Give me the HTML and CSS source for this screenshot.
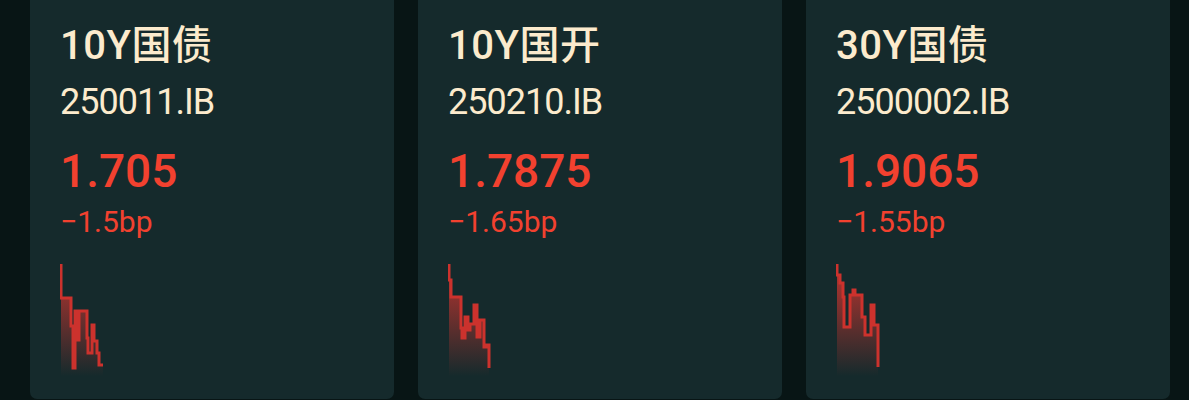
FILE: index.html
```html
<!DOCTYPE html>
<html lang="zh-CN">
  <head>
    <meta charset="UTF-8" />
    <meta name="viewport" content="width=device-width, initial-scale=1.0" />
    <title>债券行情</title>
    <link rel="stylesheet" href="styles.css">
  </head>
  <body>
    <div class="quote-row">
      <div class="quote-card">
        <div class="quote-name">10Y国债</div>
        <div class="quote-code">250011.IB</div>
        <div class="quote-price">1.705</div>
        <div class="quote-change">−1.5bp</div>
        <svg class="spark" width="46" height="114" viewBox="0 0 46 114">
          <defs>
            <linearGradient id="fill1" x1="0" y1="0" x2="0" y2="1">
              <stop offset="0" stop-color="#d0352f" stop-opacity="0.9" />
              <stop offset="1" stop-color="#d0352f" stop-opacity="0" />
            </linearGradient>
          </defs>
          <path class="spark-fill" fill="url(#fill1)" d="M1,2 V36 H11 V64 H13 V106 H15 V49 H18 V78 H19 V49 H27 V76 H28 V91 H32 V63 H34 V79 H37 V91 H39 V103 H43 V114 H1 Z" />
          <path class="spark-line" d="M1,2 V36 H11 V64 H13 V106 H15 V49 H18 V78 H19 V49 H27 V76 H28 V91 H32 V63 H34 V79 H37 V91 H39 V103 H43" />
        </svg>
      </div>

      <div class="quote-card">
        <div class="quote-name">10Y国开</div>
        <div class="quote-code">250210.IB</div>
        <div class="quote-price">1.7875</div>
        <div class="quote-change">−1.65bp</div>
        <svg class="spark" width="46" height="114" viewBox="0 0 46 114">
          <defs>
            <linearGradient id="fill2" x1="0" y1="0" x2="0" y2="1">
              <stop offset="0" stop-color="#d0352f" stop-opacity="0.9" />
              <stop offset="1" stop-color="#d0352f" stop-opacity="0" />
            </linearGradient>
          </defs>
          <path class="spark-fill" fill="url(#fill2)" d="M1,2 V18 H3 V35 H13 V66 H14 V76 H17 V55 H20 V68 H22 V62 H26 V43 H29 V75 H32 V58 H36 V85 H38 V83 H41 V106 V114 H1 Z" />
          <path class="spark-line" d="M1,2 V18 H3 V35 H13 V66 H14 V76 H17 V55 H20 V68 H22 V62 H26 V43 H29 V75 H32 V58 H36 V85 H38 V83 H41 V106" />
        </svg>
      </div>

      <div class="quote-card">
        <div class="quote-name">30Y国债</div>
        <div class="quote-code">2500002.IB</div>
        <div class="quote-price">1.9065</div>
        <div class="quote-change">−1.55bp</div>
        <svg class="spark" width="46" height="114" viewBox="0 0 46 114">
          <defs>
            <linearGradient id="fill3" x1="0" y1="0" x2="0" y2="1">
              <stop offset="0" stop-color="#d0352f" stop-opacity="0.9" />
              <stop offset="1" stop-color="#d0352f" stop-opacity="0" />
            </linearGradient>
          </defs>
          <path class="spark-fill" fill="url(#fill3)" d="M1,2 V13 H4 V21 H7 V35 H8 V65 H14 V33 H17 V28 H19 V33 H26 V55 H29 V73 H35 V43 H38 V63 H42 V105 V114 H1 Z" />
          <path class="spark-line" d="M1,2 V13 H4 V21 H7 V35 H8 V65 H14 V33 H17 V28 H19 V33 H26 V55 H29 V73 H35 V43 H38 V63 H42 V105" />
        </svg>
      </div>
    </div>
  </body>
</html>
```

FILE: styles.css
```css
body {
  font-family: Roboto, "Noto Sans CJK SC", sans-serif;
  background: #081515;
  margin: 0;
  padding: 0;
  height: 400px;
  overflow: hidden;
}

.quote-row {
  display: flex;
  gap: 24px;
  padding: 0 19px 0 30px;
}

.quote-card {
  background: #152a2c;
  width: 364px;
  height: 399px;
  padding: 22px 30px 0;
  box-sizing: border-box;
  border-radius: 0 0 7px 7px;
  display: flex;
  flex-direction: column;
  align-items: flex-start;
}

.quote-name {
  color: #fcebcd;
  font-size: 40px;
  font-weight: 500;
  line-height: 48px;
  letter-spacing: 0.5px;
}

.quote-code {
  color: #fcebcd;
  font-size: 36px;
  line-height: 40px;
  letter-spacing: -1px;
  margin-top: 12px;
}

.quote-price {
  color: #f2412f;
  font-size: 46px;
  font-weight: 500;
  line-height: 54px;
  margin-top: 22px;
}

.quote-change {
  color: #f2412f;
  font-size: 30px;
  line-height: 36px;
  margin-top: 6px;
}

.spark {
  display: block;
  margin-top: 22px;
}

.spark-line {
  fill: none;
  stroke: #cc322d;
  stroke-width: 3;
}
```
